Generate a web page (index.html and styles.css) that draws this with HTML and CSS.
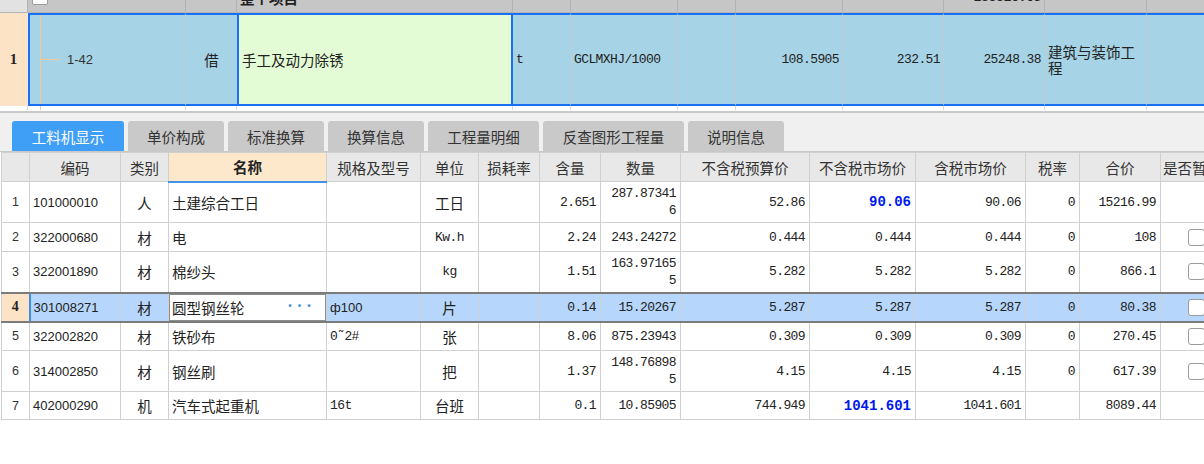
FILE: index.html
```html
<!DOCTYPE html>
<html lang="zh-CN">
<head>
<meta charset="utf-8">
<title>工料机显示</title>
<link rel="stylesheet" href="styles.css">
</head>
<body>
<section class="top">
  <div class="trow thead">
    <div class="h-rn"></div>
    <div class="c-tree"><span class="hcb"></span></div>
    <div class="c-jie"></div>
    <div class="c-name"><span class="htxt">整个项目</span></div>
    <div></div>
    <div></div>
    <div></div>
    <div></div>
    <div></div>
    <div class="right"><span class="htxt num">188816.65</span></div>
    <div></div>
    <div class="last"></div>
  </div>
  <div class="trow r1">
    <div class="rn">1</div>
    <div class="c-tree"><span class="tline"></span><span class="code">1-42</span></div>
    <div class="c-jie center">借</div>
    <div class="c-name">手工及动力除锈</div>
    <div class="num">t</div>
    <div class="num">GCLMXHJ/1000</div>
    <div></div>
    <div class="num right">108.5905</div>
    <div class="num right">232.51</div>
    <div class="num right">25248.38</div>
    <div class="wrap">建筑与装饰工程</div>
    <div class="last"></div>
  </div>
  <div class="trow r2">
    <div class="rn2"></div>
    <div class="c-tree"><span class="tline"></span></div>
    <div></div><div></div><div></div><div></div><div></div><div></div><div></div><div></div><div></div><div class="last"></div>
  </div>
</section>

<nav class="tabs">
  <div class="tab active" style="width:112px">工料机显示</div>
  <div class="tab" style="width:96px">单价构成</div>
  <div class="tab" style="width:96px">标准换算</div>
  <div class="tab" style="width:96px">换算信息</div>
  <div class="tab" style="width:111px">工程量明细</div>
  <div class="tab" style="width:141px">反查图形工程量</div>
  <div class="tab" style="width:96px">说明信息</div>
</nav>

<table class="grid">
  <colgroup>
    <col style="width:28px"><col style="width:91px"><col style="width:48px"><col style="width:158px">
    <col style="width:94px"><col style="width:58px"><col style="width:61px"><col style="width:61px">
    <col style="width:80px"><col style="width:129px"><col style="width:106px"><col style="width:110px">
    <col style="width:54px"><col style="width:81px"><col style="width:70px">
  </colgroup>
  <thead>
    <tr>
      <th></th><th>编码</th><th>类别</th><th class="hname">名称</th><th>规格及型号</th><th>单位</th><th>损耗率</th><th>含量</th><th>数量</th><th>不含税预算价</th><th>不含税市场价</th><th>含税市场价</th><th>税率</th><th>合价</th><th class="hleft">是否暂估</th>
    </tr>
  </thead>
  <tbody>
    <tr class="tall">
      <td class="rno">1</td><td class="code">101000010</td><td class="center">人</td><td>土建综合工日</td><td></td><td class="center">工日</td><td></td>
      <td class="num right">2.651</td><td class="num right brk">287.873416</td><td class="num right">52.86</td><td class="num right hot">90.06</td><td class="num right">90.06</td><td class="num right">0</td><td class="num right">15216.99</td><td></td>
    </tr>
    <tr>
      <td class="rno">2</td><td class="code">322000680</td><td class="center">材</td><td>电</td><td></td><td class="center num">Kw.h</td><td></td>
      <td class="num right">2.24</td><td class="num right brk">243.24272</td><td class="num right">0.444</td><td class="num right">0.444</td><td class="num right">0.444</td><td class="num right">0</td><td class="num right">108</td><td class="cbcell"><span class="cb"></span></td>
    </tr>
    <tr class="tall">
      <td class="rno">3</td><td class="code">322001890</td><td class="center">材</td><td>棉纱头</td><td></td><td class="center num">kg</td><td></td>
      <td class="num right">1.51</td><td class="num right brk">163.971655</td><td class="num right">5.282</td><td class="num right">5.282</td><td class="num right">5.282</td><td class="num right">0</td><td class="num right">866.1</td><td class="cbcell"><span class="cb"></span></td>
    </tr>
    <tr class="sel">
      <td class="rno cur">4</td><td class="code first">301008271</td><td class="center">材</td><td class="edit"><span>圆型钢丝轮</span><span class="dots">···</span></td><td class="code">ф100</td><td class="center">片</td><td></td>
      <td class="num right">0.14</td><td class="num right brk">15.20267</td><td class="num right">5.287</td><td class="num right">5.287</td><td class="num right">5.287</td><td class="num right">0</td><td class="num right">80.38</td><td class="cbcell"><span class="cb"></span></td>
    </tr>
    <tr>
      <td class="rno">5</td><td class="code">322002820</td><td class="center">材</td><td>铁砂布</td><td class="num">0˜2#</td><td class="center">张</td><td></td>
      <td class="num right">8.06</td><td class="num right brk">875.23943</td><td class="num right">0.309</td><td class="num right">0.309</td><td class="num right">0.309</td><td class="num right">0</td><td class="num right">270.45</td><td class="cbcell"><span class="cb"></span></td>
    </tr>
    <tr class="tall">
      <td class="rno">6</td><td class="code">314002850</td><td class="center">材</td><td>钢丝刷</td><td></td><td class="center">把</td><td></td>
      <td class="num right">1.37</td><td class="num right brk">148.768985</td><td class="num right">4.15</td><td class="num right">4.15</td><td class="num right">4.15</td><td class="num right">0</td><td class="num right">617.39</td><td class="cbcell"><span class="cb"></span></td>
    </tr>
    <tr class="short">
      <td class="rno">7</td><td class="code">402000290</td><td class="center">机</td><td>汽车式起重机</td><td class="num">16t</td><td class="center">台班</td><td></td>
      <td class="num right">0.1</td><td class="num right brk">10.85905</td><td class="num right">744.949</td><td class="num right hot">1041.601</td><td class="num right">1041.601</td><td class="num right"></td><td class="num right">8089.44</td><td></td>
    </tr>
  </tbody>
</table>
</body>
</html>
```

FILE: styles.css
```css
* { box-sizing: border-box; margin: 0; padding: 0; }
html, body { width: 1204px; height: 464px; overflow: hidden; background: #fff; }
body {
  font-family: "Noto Sans CJK SC", "Liberation Sans", sans-serif;
  font-size: 14.5px;
  color: #222;
}

.num { font-family: "Liberation Mono", "DejaVu Sans Mono", monospace; font-size: 13px; letter-spacing: -0.6px; }
.code { font-family: "Liberation Sans", "Noto Sans CJK SC", sans-serif; font-size: 13px; }
.right { justify-content: flex-end; text-align: right; }
.center { justify-content: center; text-align: center; }

/* ---------- top (项目) grid ---------- */
.top { height: 113px; border-bottom: 2px solid #c9c9c9; background: #fff; overflow: hidden; }
.trow {
  display: grid;
  grid-template-columns: 28px 158px 51px 276px 58px 107px 58px 107px 101px 101px 102px 57px;
}
.thead { height: 13px; background: #c6c6c6; border-bottom: 1px solid #b5b5b5; overflow: hidden; }
.thead > div {
  height: 12px; display: flex; align-items: flex-end; overflow: hidden;
  border-right: 1px solid #b2b2b2; padding: 0 3px;
}
.thead > .h-rn { background: #e2e2e2; }
.thead > .last { border-right: 0; }
.htxt { line-height: 28px; font-weight: bold; color: #222; }
.htxt.num { letter-spacing: -0.3px; }
.hcb {
  width: 16px; height: 16px; margin: 0 0 7px 1px; background: #fff;
  border: 1px solid #9a9a9a; border-radius: 2px; flex: none;
}

.r1 { height: 93px; }
.r1 > div {
  background: #a6d4e6; display: flex; align-items: center; padding: 0 3px;
  border-top: 2px solid #1b6ff2; border-bottom: 2px solid #1b6ff2;
  border-right: 1px solid #bfcdd2; overflow: hidden;
}
.r1 > .rn {
  background: #fde3c6; border: 0; border-right: 1px solid #ececec; justify-content: center;
  font-family: "Liberation Serif", serif; font-weight: bold; font-size: 15px; color: #222;
}
.r1 > .c-tree { border-left: 2px solid #1b6ff2; padding: 0; align-items: stretch; }
.r1 > .c-jie { border-right: 0; }
.r1 > .c-name { background: #e3fcd5; border-left: 2px solid #1b6ff2; border-right: 2px solid #1b6ff2; }
.r1 > .last { border-right: 0; }
.r1 > .wrap { line-height: 16px; }
.c-tree .code { align-self: center; color: #333; }
.tline {
  width: 27px; margin-left: 10px; flex: none;
  background:
    linear-gradient(#f4c895, #f4c895) 0 0 / 1px 100% no-repeat,
    linear-gradient(#f4c895, #f4c895) 0 50% / 20px 1px no-repeat;
}

.r2 { height: 4px; }
.r2 > div { border-right: 1px solid #dadada; display: flex; }
.r2 > .rn2 { background: #fff; }
.r2 > .c-tree { align-items: stretch; }
.r2 .tline { background: linear-gradient(#f4c895, #f4c895) 0 0 / 1px 100% no-repeat; margin-left: 12px; }
.r2 > .last { border-right: 0; }

/* ---------- tabs ---------- */
.tabs {
  display: flex; gap: 4px; height: 39px; padding: 8px 0 0 12px;
  background: #f0f0f0; border-bottom: 1px solid #c8c8c8;
}
.tab {
  height: 30px; border-radius: 3px 3px 0 0; background: #c9c9c9; color: #333;
  display: flex; align-items: center; justify-content: center; flex: none;
}
.tab.active { background: #3f9ef5; color: #fff; }

/* ---------- material grid ---------- */
.grid { border-collapse: collapse; table-layout: fixed; width: 1219px; margin-left: 1px; }
.grid th, .grid td {
  border: 1px solid #d0d0d0; padding: 0 3px; overflow: hidden; white-space: nowrap;
  vertical-align: middle;
}
.grid th { height: 29px; background: #e8e8e8; font-weight: normal; color: #333; text-align: center; }
.grid th.hname { background: #fde8cc; border-bottom: 2px solid #4292e6; font-weight: bold; color: #222; }
.grid th.hleft { text-align: left; padding-left: 2px; }
.grid td { height: 29px; }
.grid tr.tall td { height: 41px; }
.grid tr.short td { height: 28px; }
.grid td.right { text-align: right; padding-right: 4px; }
.grid td.center { text-align: center; }
.grid td.brk { white-space: normal; word-break: break-all; line-height: 17px; padding-left: 8px; }
.grid td.rno { font-family: "Liberation Sans", sans-serif; font-size: 12.5px; text-align: center; color: #333; padding: 0; }
.grid td.code { padding-left: 3px; color: #222; }
.grid td.hot { color: #0018f0; font-weight: bold; font-size: 14px; letter-spacing: 0; }

.grid tr.sel td { background: #b6d7fb; border-top: 2px solid #7b7b7b; border-bottom: 2px solid #7b7b7b; }
.grid tr.sel td.cur {
  background: #fde3c6; font-family: "Liberation Serif", serif; font-weight: bold; font-size: 14px; color: #222;
}
.grid tr.sel td.first { border-left: 2px solid #3d8ee6; }
.grid tr.sel td.edit { background: #fff; box-shadow: inset 0 0 0 1px #8e8e8e; }
.edit .dots {
  float: right; color: #3d8fe0; font-weight: bold; font-size: 11px; letter-spacing: -1.5px;
  margin-right: 10px;
}

.cbcell { padding-left: 27px !important; }
.cb {
  display: block; width: 17px; height: 17px; background: #fff;
  border: 1px solid #9c9c9c; border-radius: 3px;
}
```
